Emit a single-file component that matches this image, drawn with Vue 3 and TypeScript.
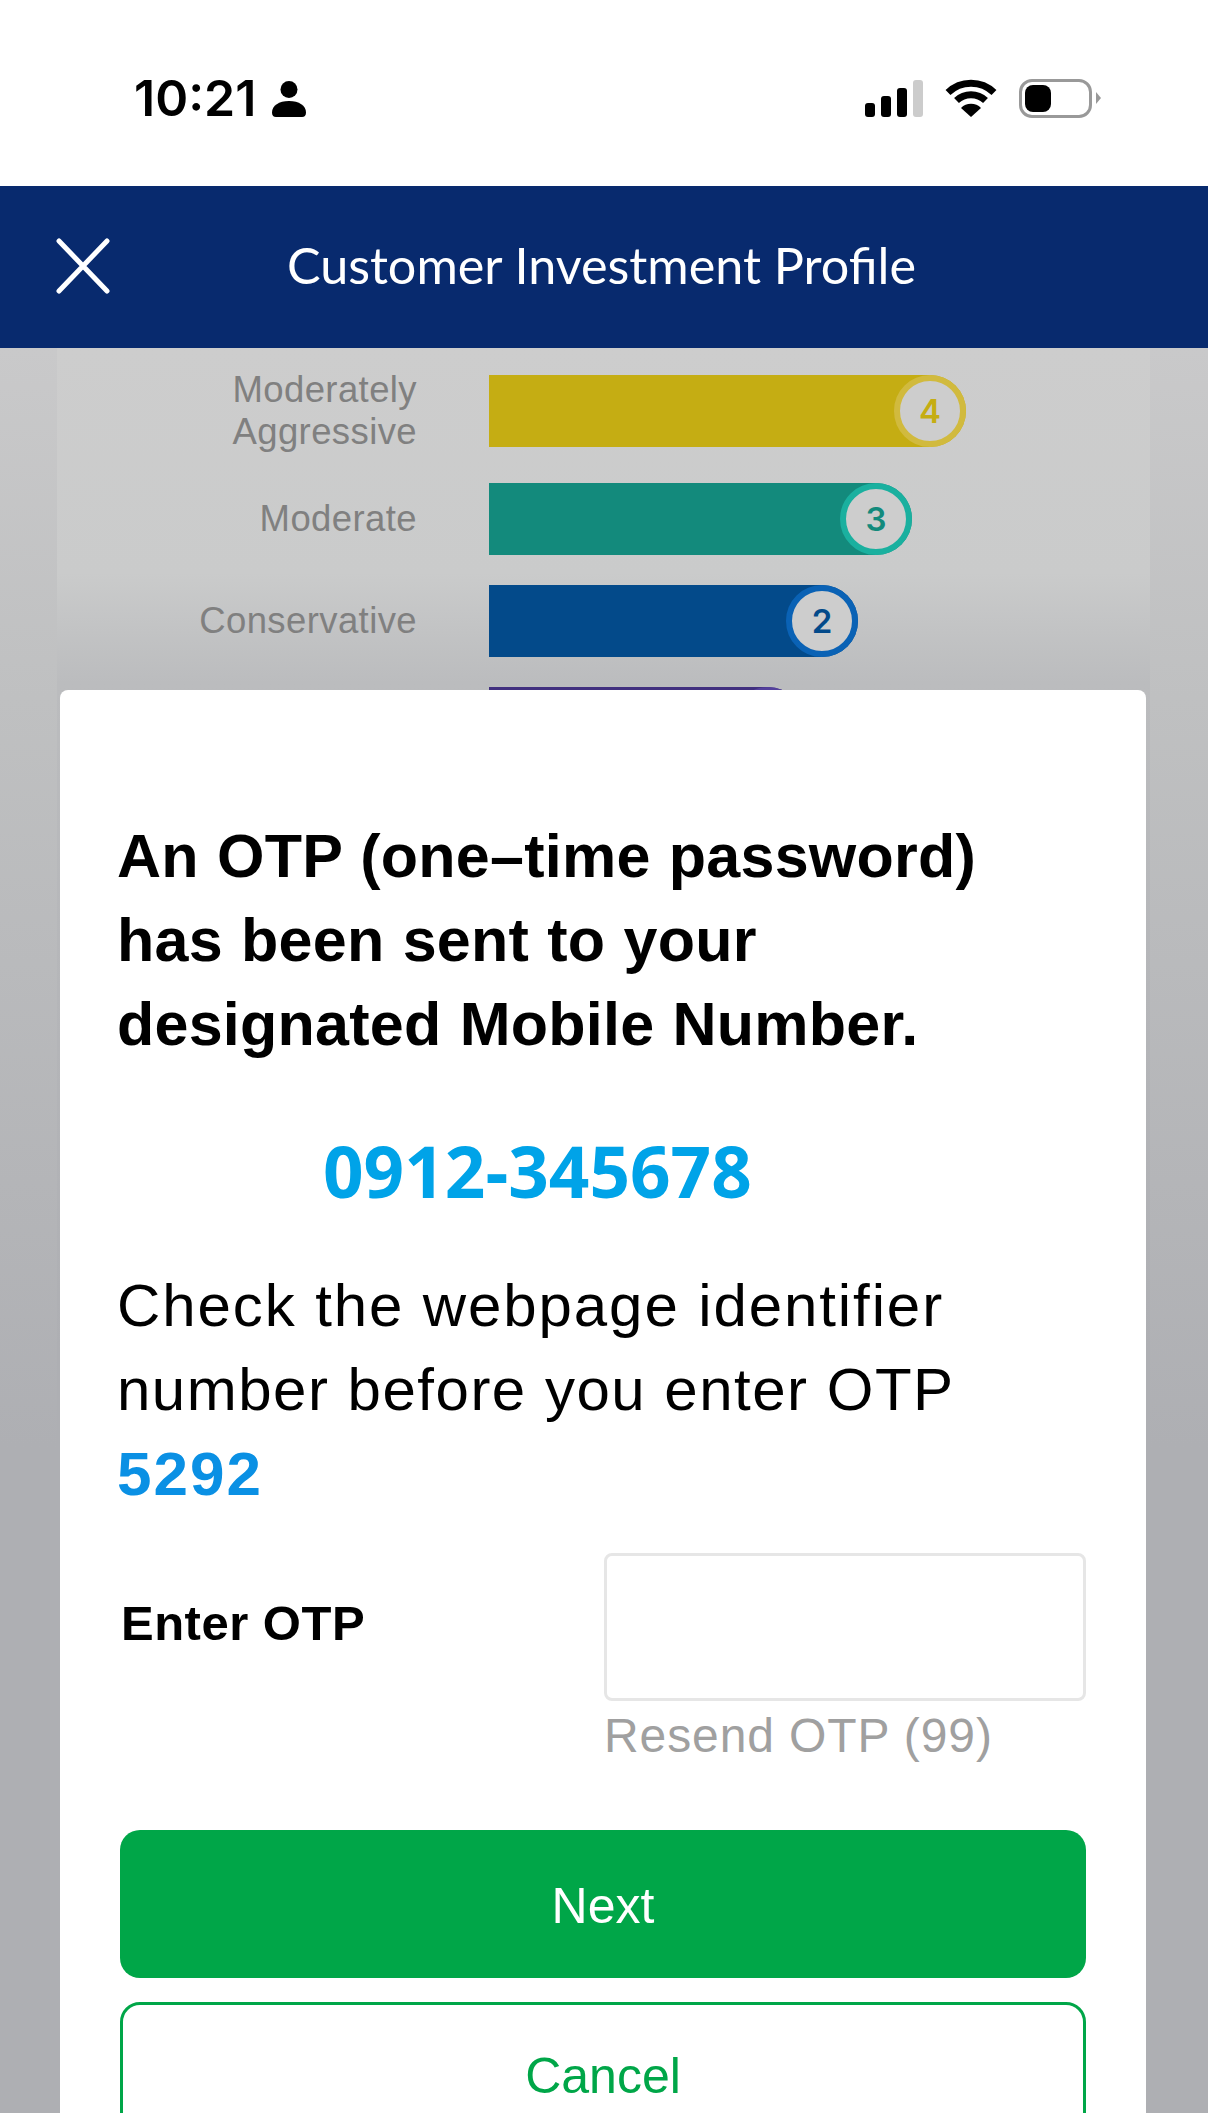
<script setup lang="ts">
interface RiskRow {
  label: string[]
  level: number
  width: number
  color: string
  ring: string
}

// barras do grafico que fica atras do modal
const rows: RiskRow[] = [
  { label: ['Moderately', 'Aggressive'], level: 4, width: 477, color: '#c5ad13', ring: '#d1ba3e' },
  { label: ['Moderate'], level: 3, width: 423, color: '#138a7c', ring: '#1ab09f' },
  { label: ['Conservative'], level: 2, width: 369, color: '#034a8a', ring: '#0a62b5' },
  { label: ['Defensive'], level: 1, width: 315, color: '#41307f', ring: '#54409c' },
]
</script>

<template>
  <div class="screen">
    <div class="status-bar">
      <div class="status-left">
        <span class="clock">10:21</span>
        <svg class="person" viewBox="0 0 34 36" aria-hidden="true">
          <circle cx="17" cy="8.500" r="8.500" />
          <path d="M0 31.500C0 24.500 7 20 17 20s17 4.500 17 11.500C34 34.500 32.500 36 30 36H4C1.500 36 0 34.500 0 31.500Z" />
        </svg>
      </div>
      <div class="status-right">
        <div class="signal">
          <i class="bar-1"></i>
          <i class="bar-2"></i>
          <i class="bar-3"></i>
          <i class="bar-4"></i>
        </div>
        <svg class="wifi" viewBox="0 0 52 38" aria-hidden="true">
          <path d="M3 13.500A33 33 0 0 1 49 13.500" fill="none" stroke="#000" stroke-width="7" />
          <path d="M11.500 21.500A21 21 0 0 1 40.500 21.500" fill="none" stroke="#000" stroke-width="7" />
          <path d="M26 38L16 29A14 14 0 0 1 36 29Z" />
        </svg>
        <div class="battery">
          <div class="battery-level"></div>
        </div>
        <div class="battery-nub"></div>
      </div>
    </div>

    <header class="app-header">
      <svg class="close" viewBox="0 0 54 56" aria-hidden="true">
        <path d="M3 3L51 53M51 3L3 53" fill="none" stroke="#fff" stroke-width="5" stroke-linecap="round" />
      </svg>
      <h1 class="app-title">Customer Investment Profile</h1>
    </header>

    <main class="backdrop">
      <section class="chart">
        <div v-for="row in rows" :key="row.level" class="chart-row">
          <div class="chart-label">
            <div v-for="line in row.label" :key="line">{{ line }}</div>
          </div>
          <div class="chart-bar" :style="{ width: row.width + 'px', background: row.color }">
            <span class="chart-badge" :style="{ borderColor: row.ring, color: row.color }">{{ row.level }}</span>
          </div>
        </div>
      </section>

      <div class="modal">
        <h2 class="modal-title">An OTP (one–time password)<br />has been sent to your<br />designated Mobile Number.</h2>
        <div class="phone">0912-345678</div>
        <p class="note">
          Check the webpage identifier<br /><span class="note-tight">number before you enter OTP</span><br /><strong class="code">5292</strong>
        </p>

        <div class="otp-row">
          <label class="otp-label" for="otp">Enter OTP</label>
          <div class="otp-field">
            <input id="otp" class="otp-input" type="text" />
            <div class="resend">Resend OTP (99)</div>
          </div>
        </div>

        <div class="actions">
          <button class="btn btn-primary" type="button">Next</button>
          <button class="btn btn-outline" type="button">Cancel</button>
        </div>
      </div>
    </main>
  </div>
</template>

<style scoped>
.screen {
  width: 1208px;
  height: 2113px;
  overflow: hidden;
  display: flex;
  flex-direction: column;
  background: #fff;
  font-family: "Liberation Sans", Arial, sans-serif;
}

/* Barra de status */
.status-bar {
  height: 186px;
  flex: none;
  box-sizing: border-box;
  padding: 78px 107px 0 134px;
  display: flex;
  justify-content: space-between;
  align-items: flex-start;
}

.status-left {
  display: flex;
  align-items: center;
  height: 40px;
}

.clock {
  font-family: Inter, sans-serif;
  font-size: 50px;
  font-weight: 600;
  line-height: 40px;
  color: #000;
}

.person {
  width: 34px;
  height: 36px;
  margin-left: 16px;
  margin-top: 1px;
}

.status-right {
  display: flex;
  align-items: center;
  height: 40px;
}

.signal {
  display: flex;
  align-items: flex-end;
  gap: 6px;
  height: 37px;
  margin-top: 1px;
}

.signal i {
  display: block;
  width: 10px;
  border-radius: 3px;
  background: #000;
}

.bar-1 { height: 14px; }
.bar-2 { height: 21px; }
.bar-3 { height: 29px; }
.signal .bar-4 { height: 37px; background: #ccc; }

.wifi {
  width: 52px;
  height: 38px;
  margin-left: 22px;
}

.battery {
  width: 73px;
  height: 39px;
  box-sizing: border-box;
  margin-left: 22px;
  padding: 3px;
  border: 3px solid #999;
  border-radius: 13px;
}

.battery-level {
  width: 26px;
  height: 27px;
  background: #000;
  border-radius: 8px;
}

.battery-nub {
  width: 0;
  height: 0;
  margin-left: 4px;
  border-top: 6px solid transparent;
  border-bottom: 6px solid transparent;
  border-left: 5px solid #999;
}

/* Cabecalho */
.app-header {
  height: 162px;
  flex: none;
  position: relative;
  background: #082a6e;
  display: flex;
  align-items: center;
  justify-content: center;
}

.close {
  position: absolute;
  left: 56px;
  top: 52px;
  width: 54px;
  height: 56px;
}

.app-title {
  margin: 0 5px 5px 0;
  font-family: Lato, sans-serif;
  font-size: 50.300px;
  font-weight: 400;
  color: #fff;
}

/* Fundo escurecido */
.backdrop {
  flex: 1;
  position: relative;
  background: linear-gradient(#c9c9ca 0, #bfc0c1 350px, #aeafb3 1100px);
}

.chart {
  width: 1093px;
  height: 100%;
  box-sizing: border-box;
  margin-left: 57px;
  padding-top: 21px;
  display: flex;
  flex-direction: column;
  gap: 30px;
  background: linear-gradient(#cdcdcd 0, #cacbcb 225px, #bbbcbe 335px, #aeafb3 1000px);
}

.chart-row {
  display: flex;
  align-items: center;
  gap: 72px;
}

.chart-label {
  width: 360px;
  flex: none;
  text-align: right;
  font-size: 36.500px;
  line-height: 42px;
  letter-spacing: 0.4px;
  color: #808080;
}

.chart-bar {
  position: relative;
  height: 72px;
  border-radius: 0 36px 36px 0;
}

.chart-badge {
  position: absolute;
  top: 0;
  right: 0;
  width: 72px;
  height: 72px;
  box-sizing: border-box;
  border: 6px solid;
  border-radius: 50%;
  background: #cdcdcd;
  display: flex;
  align-items: center;
  justify-content: center;
  font-family: Inter, sans-serif;
  font-size: 33px;
  font-weight: 600;
}

/* Modal */
.modal {
  position: absolute;
  left: 60px;
  top: 342px;
  width: 1086px;
  box-sizing: border-box;
  padding: 124px 60px 0 57px;
  background: #fff;
  border-radius: 8px;
}

.modal-title {
  margin: 0;
  font-size: 61px;
  font-weight: 700;
  line-height: 84px;
  letter-spacing: 0.25px;
  word-spacing: 1px;
  white-space: nowrap;
  color: #000;
}

.phone {
  margin-top: 63px;
  padding-left: 206px;
  font-family: "Open Sans", sans-serif;
  font-size: 71px;
  font-weight: 700;
  line-height: 84px;
  color: #00a3e8;
}

.note {
  margin: 51px 0 0;
  font-size: 60px;
  line-height: 84px;
  letter-spacing: 1.9px;
  white-space: nowrap;
  color: #000;
}

.note-tight {
  letter-spacing: 1.500px;
}

.code {
  font-size: 62px;
  font-weight: 700;
  letter-spacing: 2px;
  color: #0a90e4;
}

.otp-row {
  margin-top: 36px;
  padding-left: 4px;
  display: flex;
  align-items: flex-start;
}

.otp-label {
  width: 483px;
  flex: none;
  font-size: 49px;
  font-weight: 700;
  line-height: 141px;
  letter-spacing: 0.5px;
  color: #000;
}

.otp-field {
  flex: 1;
}

.otp-input {
  display: block;
  width: 100%;
  height: 148px;
  box-sizing: border-box;
  border: 3px solid #e6e6e6;
  border-radius: 8px;
  background: #fff;
  outline: none;
}

.resend {
  margin-top: 5px;
  font-size: 48px;
  line-height: 60px;
  letter-spacing: 0.9px;
  color: #a0a0a0;
}

.actions {
  margin: 64px 0 0 3px;
  display: flex;
  flex-direction: column;
  gap: 24px;
}

.btn {
  height: 148px;
  box-sizing: border-box;
  border-radius: 20px;
  font-family: inherit;
  font-size: 50px;
  padding: 0;
}

.btn-primary {
  padding-top: 4px;
  border: none;
  background: #00a648;
  color: #fff;
}

.btn-outline {
  border: 3px solid #00a648;
  background: #fff;
  color: #00a648;
}
</style>
